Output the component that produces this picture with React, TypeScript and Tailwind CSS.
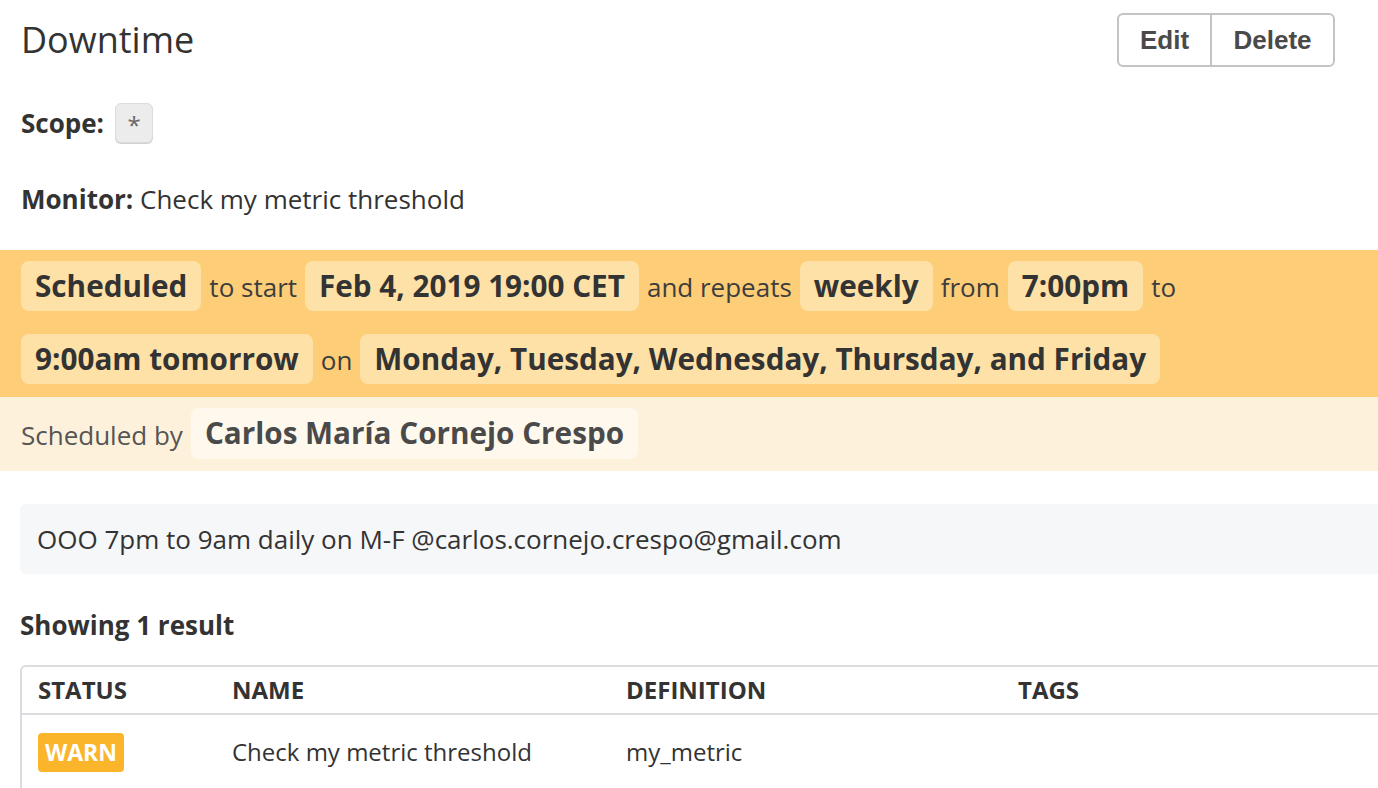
import React from "react";

const pill = "rounded-lg bg-[#fde1a6] px-[14px] h-[50px] flex items-center text-[29.7px] font-bold text-[#333]";
const word = "text-[26px] text-[#3d3d3d] mt-[3px]";

function Schedule() {
  return (
    <div className="mt-[35px] bg-[#fdcd78] pl-[21px] pt-[11px] pb-[13px]">
      <div className="flex flex-col gap-[23px]">
        <div className="flex items-center gap-2">
          <span className={pill}>Scheduled</span>
          <span className={word}>to start</span>
          <span className={pill}>Feb 4, 2019 19:00 CET</span>
          <span className={word}>and repeats</span>
          <span className={pill}>weekly</span>
          <span className={word}>from</span>
          <span className={pill}>7:00pm</span>
          <span className={word}>to</span>
        </div>
        <div className="flex items-center gap-2">
          <span className={pill}>9:00am tomorrow</span>
          <span className={word}>on</span>
          <span className={pill}>Monday, Tuesday, Wednesday, Thursday, and Friday</span>
        </div>
      </div>
    </div>
  );
}

export default function App() {
  const cols = [
    { label: "STATUS", w: "w-[210px] pl-[16px]" },
    { label: "NAME", w: "w-[394px]" },
    { label: "DEFINITION", w: "w-[392px]" },
    { label: "TAGS", w: "flex-1" },
  ];

  return (
    <div className="min-h-screen w-full overflow-hidden bg-white font-['Open_Sans',sans-serif] text-[#333]">
      <header className="flex items-center justify-between pl-[21px] pr-[43px] pt-[13px]">
        <h1 className="text-[36px] font-normal leading-none text-[#333]">Downtime</h1>
        <div className="flex h-[54px] overflow-hidden rounded-md border-2 border-[#c4c4c4] font-['Liberation_Sans',Arial,sans-serif] text-[26px] font-bold text-[#4a4a4a]">
          <button className="w-[91px]">Edit</button>
          <button className="w-[123px] border-l-2 border-[#c4c4c4]">Delete</button>
        </div>
      </header>

      <div className="mt-[36px] flex items-center gap-[11px] pl-[21px]">
        <span className="text-[26px] font-bold text-[#333]">Scope:</span>
        <span className="flex h-[40px] w-[38px] items-start justify-center rounded-md border border-[#dcdcdc] bg-[#ececec] pt-[3px] text-[24px] text-[#666] shadow-[0_1px_0_#d0d0d0]">*</span>
      </div>

      <div className="mt-[40px] pl-[21px] text-[26px] leading-[32px]">
        <span className="font-bold">Monitor:</span> Check my metric threshold
      </div>

      <Schedule />

      <div className="flex items-center gap-2 bg-[#fef1dc] pl-[21px] pt-[11px] pb-[12px]">
        <span className="mt-[3px] text-[26px] text-[#555]">Scheduled by</span>
        <span className="flex h-[51px] items-center rounded-lg bg-[#fff8ed] px-[14px] text-[29.7px] font-bold text-[#4a4a4a]">
          Carlos María Cornejo Crespo
        </span>
      </div>

      <div className="ml-[20px] mt-[33px] flex h-[70px] items-center rounded-l-md bg-[#f6f7f9] pl-[17px] text-[26px] text-[#333]">
        OOO 7pm to 9am daily on M-F @carlos.cornejo.crespo@gmail.com
      </div>

      <div className="mt-[35px] pl-[20px] text-[26px] font-bold leading-[32px]">Showing 1 result</div>

      <div className="ml-[20px] mt-[24px] rounded-tl-md border-l-2 border-t-2 border-[#dcdce0]">
        <div className="flex h-[48px] items-center border-b-2 border-[#dcdce0] text-[24px] font-bold text-[#333]">
          {cols.map((c) => (
            <div key={c.label} className={c.w}>
              {c.label}
            </div>
          ))}
        </div>
        <div className="flex h-[74px] items-center text-[24px] text-[#333]">
          <div className="w-[210px] pl-[16px]">
            <span className="inline-flex h-[39px] items-center rounded bg-[#fbb52b] px-[7px] text-[23px] font-bold text-white">
              WARN
            </span>
          </div>
          <div className="w-[394px]">Check my metric threshold</div>
          <div className="w-[392px]">my_metric</div>
          <div className="flex-1"></div>
        </div>
      </div>
    </div>
  );
}
